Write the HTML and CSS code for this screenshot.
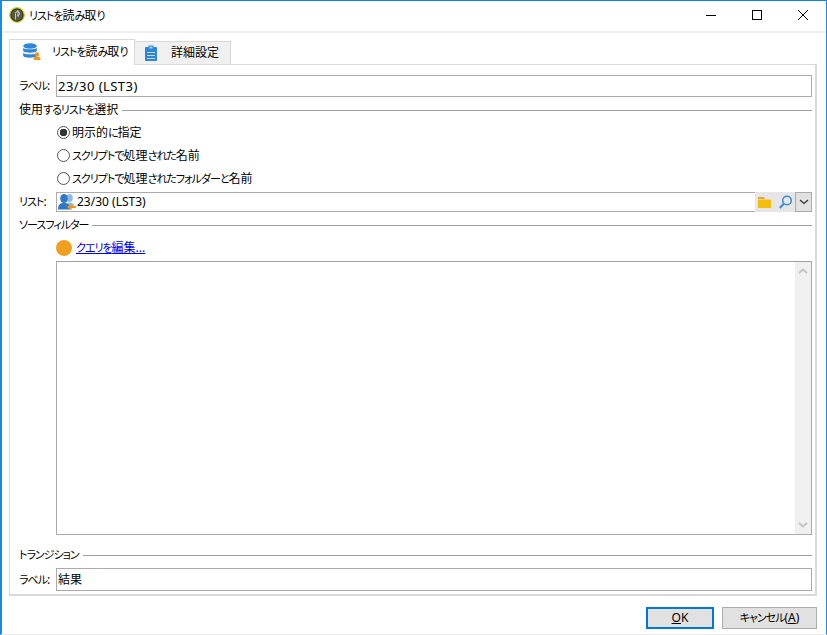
FILE: index.html
```html
<!DOCTYPE html>
<html lang="ja">
<head>
<meta charset="utf-8">
<title>リストを読み取り</title>
<link rel="stylesheet" href="styles.css">
</head>
<body>
<div class="window">
  <header class="titlebar">
    <svg class="app-icon" width="16" height="16" viewBox="0 0 16 16"><circle cx="8" cy="8" r="7.300" fill="#3d3a2c" stroke="#c8d820" stroke-width="1.200"/><circle cx="8" cy="8" r="5.500" fill="#5a5744"/><path d="M6.500 12.500V6.500a2 2 0 1 1 2 2M9 3v7" fill="none" stroke="#d8d8c8" stroke-width=".9"/></svg>
    <span class="title"><span class="k">リストを</span>読<span class="k">み</span>取<span class="k">り</span></span>
    <div class="controls">
      <svg width="12" height="12" viewBox="0 0 12 12"><path d="M1 6.500h10" stroke="#000"/></svg>
      <svg width="12" height="12" viewBox="0 0 12 12"><rect x="1.500" y="1.500" width="9" height="9" fill="none" stroke="#000"/></svg>
      <svg width="12" height="12" viewBox="0 0 12 12"><path d="M1 1l10 10M11 1L1 11" stroke="#000" fill="none"/></svg>
    </div>
  </header>
  <main class="content">
    <nav class="tabs">
      <div class="tab active">
        <svg width="18" height="18" viewBox="0 0 18 18"><g fill="#2f86d6"><ellipse cx="7" cy="3" rx="6.800" ry="2.800"/><path d="M.2 4.700c1 2 12.600 2 13.600 0v3.300c-1 2.200-12.600 2.200-13.600 0z"/><path d="M.2 9.700c1 2 12.600 2 13.600 0v3.300c-1 2.200-12.600 2.200-13.600 0z"/></g><circle cx="14" cy="11.500" r="2.200" fill="#f0961e"/><path d="M10.500 17c0-3 1.500-3.500 3.500-3.500s3.500.5 3.500 3.500z" fill="#f0961e"/></svg>
        <span><span class="k">リストを</span>読<span class="k">み</span>取<span class="k">り</span></span>
      </div>
      <div class="tab">
        <svg width="12" height="16" viewBox="0 0 12 16"><path d="M1 2h2.500V.5h5V2H11a1 1 0 0 1 1 1v12a1 1 0 0 1-1 1H1a1 1 0 0 1-1-1V3a1 1 0 0 1 1-1z" fill="#2f86d6"/><path d="M4.500 1.500h3v2h-3z" fill="#fff" opacity=".6"/><path d="M2 7.500h8M2 10.500h8M2 13.500h8" stroke="#bcdcf5"/></svg>
        <span>詳細設定</span>
      </div>
    </nav>
    <section class="panel">
      <div class="row first">
        <label class="lbl"><span class="k">ラベル</span>:</label>
        <div class="input wide">23/30 (LST3)</div>
      </div>
      <div class="section-head s1"><span>使用<span class="k">するリストを</span>選択</span></div>
      <div class="radios">
        <div class="radio-row"><span class="radio checked"></span><span>明示的<span class="k">に</span>指定</span></div>
        <div class="radio-row"><span class="radio"></span><span><span class="k">スクリプトで</span>処理<span class="k">された</span>名前</span></div>
        <div class="radio-row"><span class="radio"></span><span><span class="k">スクリプトで</span>処理<span class="k">されたフォルダーと</span>名前</span></div>
      </div>
      <div class="row list">
        <label class="lbl"><span class="k">リスト</span>:</label>
        <div class="picker">
          <div class="picker-value">
            <svg width="18" height="18" viewBox="0 0 18 18"><ellipse cx="11.500" cy="5" rx="3.300" ry="4" fill="#8dbbe6"/><path d="M8 15c0-4 1-5.500 3.500-5.500S16 11 16 13v2z" fill="#8dbbe6"/><ellipse cx="6" cy="5.500" rx="3.800" ry="4.500" fill="#2f78c4"/><path d="M0 16.500c0-5 2-6.500 6-6.500s6 1.500 6 6.500z" fill="#2f78c4"/><path d="M18 13h-4.500v-2.500L9 14l4.500 3.500V15H18z" fill="#f0961e"/></svg>
            <span>23/30 (LST3)</span>
          </div>
          <div class="picker-tools">
            <svg width="13" height="11" viewBox="0 0 13 11"><path d="M0 0h6l1 2H0z" fill="#e8a33a"/><path d="M0 2.500h13V11H0z" fill="#f3bd0f"/></svg>
            <svg width="13" height="14" viewBox="0 0 13 14"><circle cx="8" cy="5.500" r="4.300" fill="none" stroke="#3a8bdc" stroke-width="1.500"/><path d="M5 8.500L.8 13" stroke="#3a8bdc" stroke-width="2"/></svg>
          </div>
          <div class="picker-drop"><svg width="10" height="6" viewBox="0 0 10 6"><path d="M1 1l4 3.500L9 1" fill="none" stroke="#333" stroke-width="1.300"/></svg></div>
        </div>
      </div>
      <div class="section-head s2"><span class="k">ソースフィルター</span></div>
      <div class="query">
        <span class="dot"></span><a href="#"><span class="k">クエリを</span>編集...</a>
      </div>
      <div class="textarea">
        <div class="scrollbar">
          <svg width="10" height="6" viewBox="0 0 10 6"><path d="M1 5l4-3.500L9 5" fill="none" stroke="#c4c4c4" stroke-width="2"/></svg>
          <svg width="10" height="6" viewBox="0 0 10 6"><path d="M1 1l4 3.500L9 1" fill="none" stroke="#c4c4c4" stroke-width="2"/></svg>
        </div>
      </div>
      <div class="section-head s3"><span class="k">トランジション</span></div>
      <div class="row last">
        <label class="lbl"><span class="k">ラベル</span>:</label>
        <div class="input tall">結果</div>
      </div>
    </section>
    <footer class="buttons">
      <button class="btn ok"><u>O</u>K</button>
      <button class="btn cancel"><span class="k">キャンセル</span>(<u>A</u>)</button>
    </footer>
  </main>
</div>
</body>
</html>
```
FILE: styles.css
```css
* { box-sizing: border-box; }
html, body { margin: 0; padding: 0; }
body {
  width: 827px;
  height: 635px;
  overflow: hidden;
  background: #fff;
  color: #000;
  font-family: "Noto Sans", "Noto Sans CJK JP", sans-serif;
  font-size: 12px;
  line-height: 14px;
  font-feature-settings: "palt";
}
.k {
  font-size: 11px;
  letter-spacing: -1px;
}
.window {
  width: 827px;
  height: 635px;
  display: flex;
  flex-direction: column;
  border-top: 1px solid #0f85dc;
  border-left: 2px solid #1b8ae0;
  border-right: 1px solid #1b8ae0;
  border-bottom: 1px solid #e8e8e8;
}
.titlebar {
  height: 32px;
  flex: none;
  display: flex;
  align-items: center;
  padding: 0 0 2px 7px;
  border-bottom: 2px solid #f0f0f0;
}
.app-icon { flex: none; margin-right: 4px; }
.title { margin-top: 1px; }
.controls {
  margin-left: auto;
  display: flex;
  gap: 34px;
  padding-right: 17px;
  margin-top: -1px;
}
.controls svg { display: block; }
.content {
  flex: 1;
  display: flex;
  flex-direction: column;
  padding: 6px 9px 0 7px;
}
.tabs {
  display: flex;
  height: 25px;
  flex: none;
  align-items: flex-end;
  position: relative;
  z-index: 1;
}
.tab {
  height: 23px;
  width: 96px;
  display: flex;
  align-items: center;
  gap: 14px;
  padding-left: 10px;
  background: #f0f0f0;
  border: 1px solid #d9d9d9;
  border-bottom: 0;
  border-left: 0;
  white-space: nowrap;
}
.tab.active {
  height: 26px;
  width: 126px;
  margin-bottom: -1px;
  background: #fff;
  border-left: 1px solid #d9d9d9;
  gap: 11px;
  padding-left: 13px;
  padding-bottom: 1px;
}
.panel {
  height: 532px;
  flex: none;
  display: flex;
  flex-direction: column;
  border: 1px solid #d9d9d9;
  border-width: 1px 2px 2px 1px;
  padding: 10px 3px 0 9px;
}
.row { display: flex; align-items: center; }
.lbl { width: 37px; flex: none; }
.input {
  flex: 1;
  height: 22px;
  padding: 0 1px;
  border: 1px solid #ababab;
  display: flex;
  align-items: center;
}
.input.wide { font-size: 13px; letter-spacing: .45px; }
.input.tall { height: 23px; }
.section-head {
  display: flex;
  align-items: center;
  gap: 4px;
  height: 14px;
}
.section-head::after {
  content: "";
  flex: 1;
  height: 1px;
  background: #a0a0a0;
}
.s1 { margin-top: 6px; }
.s2 { margin-top: 6px; }
.s3 { margin-top: 13px; }
.radios {
  display: flex;
  flex-direction: column;
  margin-top: 4px;
  padding-left: 38px;
}
.radio-row {
  height: 23px;
  display: flex;
  align-items: center;
  gap: 2px;
}
.radio {
  width: 13px;
  height: 13px;
  border-radius: 50%;
  border: 1px solid #555;
  background: #fff;
  flex: none;
}
.radio.checked {
  background: radial-gradient(circle, #333 0 3.500px, #fff 4px);
}
.list { margin-top: 2px; }
.picker {
  flex: 1;
  height: 20px;
  display: flex;
}
.picker-value {
  flex: 1;
  display: flex;
  align-items: center;
  gap: 1px;
  padding-left: 1px;
  border: 1px solid #ababab;
  border-right: 0;
}
.picker-tools {
  width: 40px;
  flex: none;
  display: flex;
  align-items: center;
  gap: 8px;
  padding-left: 3px;
  background: #e6e6e6;
}
.picker-drop {
  width: 17px;
  flex: none;
  display: flex;
  align-items: center;
  justify-content: center;
  background: #e1e1e1;
  border: 1px solid #ababab;
}
.query {
  height: 20px;
  margin-top: 6px;
  padding-left: 37px;
  display: flex;
  align-items: center;
  gap: 4px;
}
.dot {
  width: 16px;
  height: 16px;
  border-radius: 50%;
  background: #f0a020;
  flex: none;
}
.query a { color: #0000ee; text-decoration: underline; }
.textarea {
  height: 274px;
  flex: none;
  margin-top: 3px;
  margin-left: 37px;
  border: 1px solid #ababab;
  border-top-color: #a0a0a0;
  display: flex;
  justify-content: flex-end;
}
.scrollbar {
  width: 16px;
  background: #f0f0f0;
  display: flex;
  flex-direction: column;
  justify-content: space-between;
  align-items: center;
  padding: 6px 0;
}
.last { margin-top: 6px; }
.buttons {
  display: flex;
  justify-content: flex-end;
  gap: 8px;
  margin-top: 11px;
}
.btn {
  height: 22px;
  padding: 0;
  font: inherit;
  font-feature-settings: "palt";
  color: #000;
  background: #e1e1e1;
  border: 1px solid #adadad;
  border-radius: 0;
}
.ok { width: 68px; border: 2px solid #0078d7; }
.cancel { width: 95px; }
```
